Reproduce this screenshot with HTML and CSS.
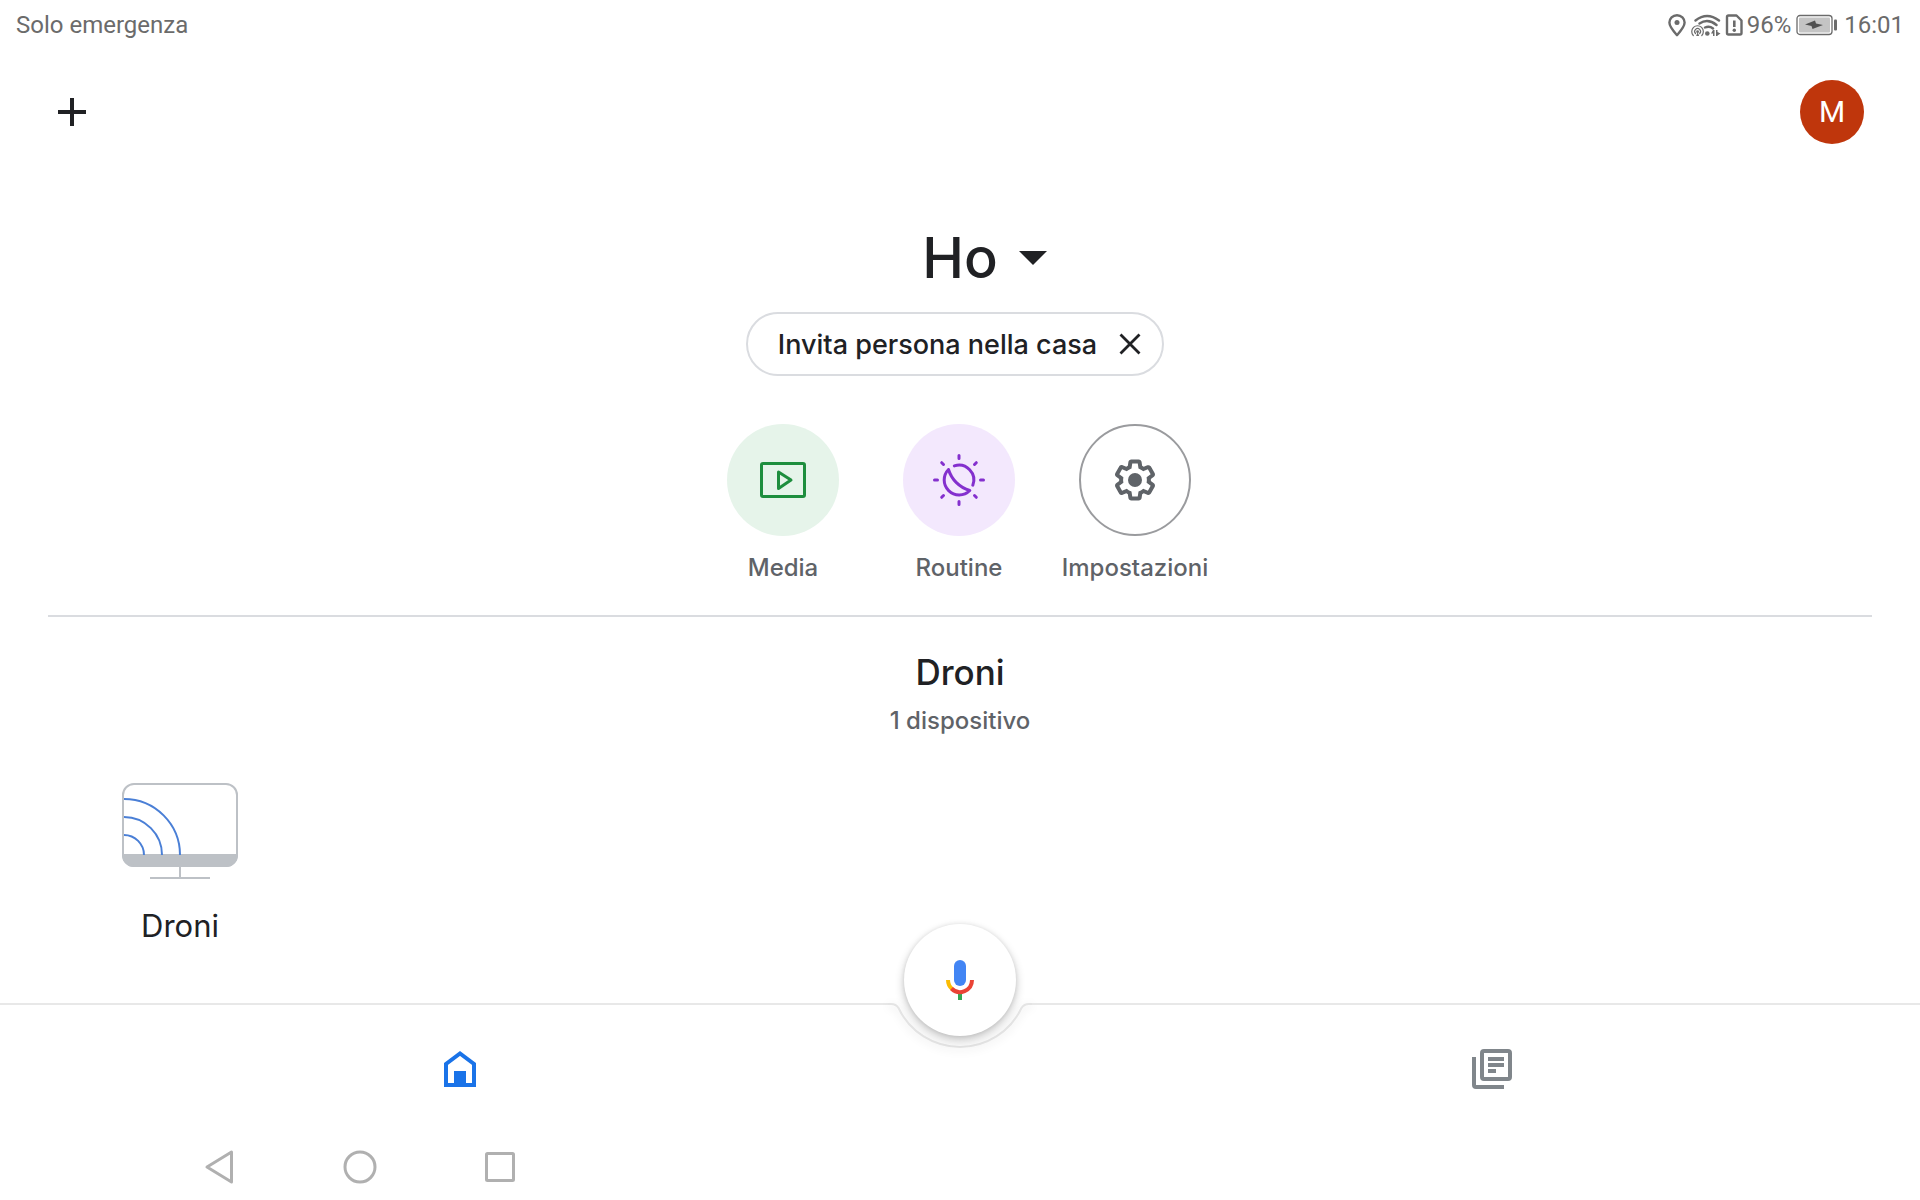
FILE: index.html
```html
<!DOCTYPE html>
<html lang="it">
<head>
<meta charset="utf-8">
<meta name="viewport" content="width=device-width, initial-scale=1">
<title>Home</title>
<link rel="stylesheet" href="styles.css">
</head>
<body>
<div class="status">
  <span class="carrier">Solo emergenza</span>
  <div class="status-icons">
    <svg width="20" height="24" viewBox="0 0 20 24" aria-hidden="true"><path d="M10 2.2c-4.3 0-7.6 3.3-7.6 7.4 0 4.3 3.7 8.300 7.600 12.600 3.900-4.300 7.600-8.300 7.600-12.600 0-4.100-3.300-7.400-7.600-7.400z" fill="none" stroke="currentColor" stroke-width="2.400" stroke-linejoin="round"/><circle cx="10" cy="9.600" r="2.500" fill="currentColor"/></svg>
    <svg class="wifi" width="30" height="24" viewBox="0 0 30 24" aria-hidden="true">
      <g fill="none" stroke="currentColor" stroke-linecap="round">
        <path d="M4.500 7.500Q16 -1.500 28 7.500M8.500 10.500Q17 5 25.500 12M14 14.500Q18.500 12.500 22 15.500" stroke-width="2.400"/>
        <path d="M2.300 22.500a5.800 5.800 0 1 1 8.500 0M4.500 20.500a2.900 2.900 0 1 1 4.200 0" stroke-width="1.200"/>
      </g>
      <g fill="currentColor"><circle cx="6.600" cy="18.700" r="1.400"/><path d="M6.600 19l1.500 4H5.100z"/><circle cx="16.300" cy="20.500" r="2.300"/><path d="M23.500 17v6h-1.500v-2.500l-2 0 2-3.500zM25 17h1.500v2l3 1.500-3 2V23H25z"/></g>
    </svg>
    <svg width="20" height="24" viewBox="0 0 20 24" aria-hidden="true"><path d="M3.500 2.500h8l5 5V20a1.500 1.500 0 0 1-1.500 1.500H3.500A1.500 1.500 0 0 1 2 20V4a1.500 1.500 0 0 1 1.500-1.500z" fill="none" stroke="currentColor" stroke-width="2.400" stroke-linejoin="round"/><path d="M9.300 7.500v6.500" stroke="currentColor" stroke-width="2.600"/><circle cx="9.300" cy="17.300" r="1.700" fill="currentColor"/></svg>
    <span>96%</span>
    <svg class="battery" width="42" height="22" viewBox="0 0 42 22" aria-hidden="true"><rect x="1" y="1.500" width="35" height="19" rx="3" fill="#fff" stroke="currentColor" stroke-width="1.300"/><rect x="3" y="3.500" width="31" height="15" rx="1" fill="#c4c4c4"/><path d="M9 10.500l10-4 1 3 7 1.500-10.500 4-1-3z" fill="#505050"/><rect x="38" y="5.500" width="3" height="11" rx="1" fill="currentColor"/></svg>
    <time>16:01</time>
  </div>
</div>

<header class="appbar">
  <button class="icon-button" aria-label="Aggiungi"><svg width="28" height="28" viewBox="0 0 28 28"><path d="M14 0v28M0 14h28" stroke="currentColor" stroke-width="4"/></svg></button>
  <button class="avatar">M</button>
</header>

<main>
  <h1><button class="home-picker"><span class="home-name">Ho</span><svg width="30" height="16" viewBox="0 0 30 16" aria-hidden="true"><path d="M1 1h28L15 15z" fill="currentColor"/></svg></button></h1>

  <div class="chip">
    <button class="chip-label">Invita persona nella casa</button>
    <button class="chip-close" aria-label="Chiudi"><svg width="22" height="22" viewBox="0 0 22 22"><path d="M1.500 1.500l19 19M20.500 1.500l-19 19" stroke="currentColor" stroke-width="2.800"/></svg></button>
  </div>

  <div class="actions">
    <button class="action">
      <span class="disc media"><svg width="56" height="56" viewBox="0 0 56 56" fill="none" stroke="currentColor" stroke-width="3" stroke-linejoin="round"><rect x="6.500" y="11.500" width="43" height="33" rx="1.500"/><path d="M23.500 20v16.500L36 28z"/></svg></span>
      Media
    </button>
    <button class="action">
      <span class="disc routine"><svg width="56" height="56" viewBox="0 0 56 56" fill="none" stroke="currentColor" stroke-width="3" stroke-linecap="round" stroke-linejoin="round"><path d="M28 3.500v3M28 49.500v3M3.500 28h3M49.500 28h3M10.700 10.700l1.800 1.800M43.500 43.500l1.800 1.800M10.700 45.300l1.800-1.800M43.500 12.500l1.800-1.800"/><path d="M23.300 13.900A14.800 14.800 0 0 1 41.800 33.200"/><path d="M17.500 17.500A14.800 14.800 0 1 0 38.800 38.500C28.500 35.500 20.500 27.500 17.500 17.500z"/></svg></span>
      Routine
    </button>
    <button class="action">
      <span class="disc settings"><svg width="48" height="48" viewBox="0 0 24 24"><path d="M13.850 22.250h-3.700c-.740 0-1.360-.540-1.450-1.270l-.270-1.890c-.270-.140-.530-.290-.790-.460l-1.800.720c-.700.260-1.470-.030-1.810-.650L2.200 15.530c-.350-.660-.200-1.440.360-1.880l1.530-1.190c-.010-.150-.020-.300-.020-.460 0-.150.010-.310.020-.460l-1.520-1.190c-.590-.450-.740-1.260-.370-1.880l1.850-3.190c.340-.620 1.110-.900 1.790-.630l1.810.730c.260-.170.520-.320.780-.460l.270-1.910c.090-.700.710-1.250 1.440-1.250h3.700c.740 0 1.360.540 1.450 1.270l.270 1.890c.270.140.530.290.790.460l1.800-.720c.710-.260 1.480.030 1.820.650l1.840 3.180c.360.660.200 1.440-.360 1.880l-1.520 1.190c.010.150.020.300.020.460s-.010.310-.020.460l1.520 1.190c.560.450.720 1.230.370 1.860l-1.860 3.220c-.340.620-1.110.900-1.800.630l-1.800-.720c-.260.170-.520.320-.780.460l-.270 1.910c-.100.680-.720 1.220-1.460 1.220zm-3.230-2h2.760l.370-2.550.530-.220c.440-.180.880-.440 1.340-.780l.450-.340 2.380.960 1.380-2.400-2.030-1.580.070-.560c.030-.260.060-.510.060-.780s-.030-.530-.060-.780l-.070-.560 2.030-1.580-1.390-2.400-2.390.960-.450-.350c-.420-.320-.870-.580-1.330-.770l-.520-.220-.370-2.550h-2.760l-.370 2.550-.530.210c-.440.190-.880.440-1.340.790l-.450.330-2.380-.950-1.390 2.390 2.030 1.580-.070.560a7 7 0 0 0-.060.790c0 .260.020.530.060.780l.070.560-2.030 1.580 1.380 2.400 2.390-.960.450.350c.430.330.860.580 1.330.770l.530.220z" fill="currentColor"/><circle cx="12" cy="12" r="3.500" fill="currentColor"/></svg></span>
      Impostazioni
    </button>
  </div>

  <section class="room">
    <h2>Droni</h2>
    <p>1 dispositivo</p>
    <div class="devices">
      <button class="device">
        <svg width="116" height="98" viewBox="0 0 116 98" fill="none" stroke="#bdc1c6" stroke-width="2"><path d="M1 73h114v0a11 11 0 0 1-11 11H12A11 11 0 0 1 1 73z" fill="#bdc1c6"/><rect x="1" y="2" width="114" height="82" rx="11"/><path d="M58 84v12M28 96h60"/><g stroke="#4a7fd6"><path d="M2 17a56 56 0 0 1 56 56M2 35a38 38 0 0 1 38 38M2 53a20 20 0 0 1 20 20"/></g></svg>
        Droni
      </button>
    </div>
  </section>
</main>

<nav class="tabs">
  <div class="edge">
    <span class="line"></span>
    <svg width="144" height="60" viewBox="0 0 144 60" fill="none"><path class="notch" d="M0 1H3Q8 1 10.500 5A68 68 0 0 0 133.500 5Q136 1 141 1H144"/></svg>
    <span class="line"></span>
  </div>
  <button class="mic" aria-label="Assistente"><svg width="28" height="40" viewBox="0 0 28 40" fill="none" stroke-width="4"><path d="M14 33v7" stroke="#34a853"/><path d="M2 20a12 12 0 0 0 4.200 9.100" stroke="#fbbc04"/><path d="M5.500 28.500A12 12 0 0 0 26 20" stroke="#ea4335"/><rect x="8" y="0" width="12" height="26" rx="6" fill="#4285f4"/></svg></button>
  <div class="tab-row">
    <a href="#home" class="tab active" aria-label="Casa"><svg width="32" height="36" viewBox="0 0 32 36"><path d="M2 34V13L16 2.500 30 13v21z" fill="none" stroke="currentColor" stroke-width="4"/><path d="M10 20h12v14H10z" fill="currentColor"/></svg></a>
    <a href="#feed" class="tab feed" aria-label="Feed"><svg width="40" height="40" viewBox="0 0 40 40" fill="none" stroke="currentColor" stroke-width="4"><rect x="10" y="2" width="28" height="28" rx="2"/><path d="M2 8v28a2 2 0 0 0 2 2h28M16 10h16M16 16h16M16 22h8"/></svg></a>
  </div>
</nav>

<div class="system">
  <button aria-label="Indietro"><svg width="32" height="36" viewBox="0 0 32 36"><path d="M27.500 3v30L3 18z"/></svg></button>
  <button aria-label="Home"><svg width="34" height="34" viewBox="0 0 34 34"><circle cx="17" cy="17" r="15"/></svg></button>
  <button aria-label="Recenti"><svg width="32" height="32" viewBox="0 0 32 32"><rect x="2.500" y="2.500" width="27" height="27" rx="1"/></svg></button>
</div>
</body>
</html>
```
FILE: styles.css
```css
* { box-sizing: border-box; }

body {
  margin: 0;
  min-height: 100vh;
  display: flex;
  flex-direction: column;
  background: #fff;
  color: #202124;
  font-family: "Inter", "Roboto", sans-serif;
  font-weight: 500;
}

button {
  padding: 0;
  border: 0;
  background: none;
  color: inherit;
  font: inherit;
  cursor: pointer;
}

svg { display: block; flex: none; }

h1, h2, p { margin: 0; font-weight: 500; }

.status {
  display: flex;
  justify-content: space-between;
  align-items: center;
  height: 50px;
  padding: 0 16px;
  font: 400 24px/48px "Roboto", sans-serif;
  color: #6b6b6b;
}

.status-icons { display: flex; align-items: center; gap: 4px; }
.status-icons span { margin-left: -2px; }
.battery { margin: 0 2px 0 1px; }

.appbar {
  display: flex;
  justify-content: space-between;
  align-items: center;
  padding: 30px 56px 0 48px;
}

.icon-button {
  display: grid;
  place-items: center;
  width: 48px;
  height: 48px;
}

.avatar {
  width: 64px;
  height: 64px;
  border-radius: 50%;
  background: #bf360c;
  color: #fff;
  font: 400 30px/64px "Roboto", sans-serif;
}

main {
  flex: 1;
  display: flex;
  flex-direction: column;
  align-items: center;
  padding: 78px 48px 0;
}

.home-picker {
  display: grid;
  grid-template-columns: 1fr auto 1fr;
  align-items: center;
  column-gap: 20px;
  font-size: 56px;
  line-height: 72px;
}
.home-name { grid-column: 2; }

.chip {
  display: flex;
  align-items: center;
  gap: 22px;
  height: 64px;
  margin: 18px 10px 0 0;
  padding: 0 21px 0 30px;
  border: 2px solid #dadce0;
  border-radius: 32px;
  font-size: 27px;
}

.actions {
  display: grid;
  grid-template-columns: repeat(3, 176px);
  margin: 48px 2px 0 0;
}

.action {
  display: flex;
  flex-direction: column;
  align-items: center;
  gap: 16px;
  font-size: 24px;
  line-height: 32px;
  color: #5f6368;
}

.disc {
  display: grid;
  place-items: center;
  width: 112px;
  height: 112px;
  border-radius: 50%;
}
.media { background: #e6f4ea; color: #1e8e3e; }
.routine { background: #f3e8fd; color: #8430ce; }
.settings { border: 2px solid #9a9b9e; }

.room {
  align-self: stretch;
  margin-top: 31px;
  padding-top: 31px;
  border-top: 2px solid #dadce0;
  text-align: center;
}
.room h2 { font-size: 35px; line-height: 48px; }
.room p { margin-top: 9px; font-size: 24px; line-height: 32px; color: #5f6368; }

.devices {
  display: grid;
  grid-template-columns: repeat(auto-fill, 264px);
  margin-top: 45px;
}

.device {
  display: flex;
  flex-direction: column;
  align-items: center;
  gap: 26px;
  font-size: 31px;
  font-weight: 400;
  line-height: 40px;
}

.tabs { position: relative; }

.edge { display: flex; height: 60px; }
.line { flex: 1; height: 2px; background: #e8e8e8; }
.notch { stroke: #e4e4e4; stroke-width: 2; filter: drop-shadow(0 2px 4px rgba(0, 0, 0, 0.12)); }
.edge svg { overflow: visible; }

.mic {
  position: absolute;
  top: -79px;
  left: calc(50% - 56px);
  display: grid;
  place-items: center;
  width: 112px;
  height: 112px;
  border-radius: 50%;
  background: #fff;
  box-shadow: 0 4px 10px rgba(0, 0, 0, 0.24), 0 0 4px rgba(0, 0, 0, 0.08);
}

.tab-row {
  display: grid;
  grid-template-columns: 920fr 144fr 856fr;
  align-items: center;
  height: 40px;
  margin-top: -14px;
}
.tab { justify-self: center; }
.active { color: #1a73e8; }
.feed { grid-column: 3; color: #80868b; }

.system {
  display: flex;
  gap: 80px;
  margin-top: 48px;
  padding: 0 190px 3px;
}
.system button {
  display: grid;
  place-items: center;
  width: 60px;
  height: 60px;
}
.system svg { fill: none; stroke: #b0b0b0; stroke-width: 3; stroke-linejoin: round; }
```
